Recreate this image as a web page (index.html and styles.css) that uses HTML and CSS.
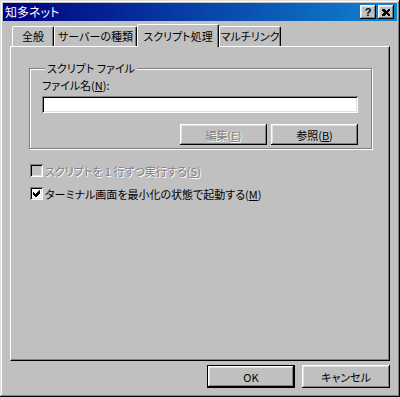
FILE: index.html
```html
<!DOCTYPE html>
<html lang="ja">
<head>
    <meta charset="UTF-8">
    <title>知多ネット</title>
    <link rel="stylesheet" href="styles.css">
</head>
<body>

    <div class="window">
        <div class="titlebar">
            <span class="title">知多ネット</span>
            <div class="caption-buttons">
                <button class="cap-btn help">?</button>
                <button class="cap-btn">
                    <svg width="8" height="7" viewBox="0 0 8 7" shape-rendering="crispEdges">
                        <path d="M0 0h2l2 2 2-2h2v1l-2 2.5 2 2.5v1h-2l-2-2-2 2h-2v-1l2-2.5-2-2.5z" fill="#000"/>
                    </svg>
                </button>
            </div>
        </div>

        <div class="tabs">
            <div class="tab tab-general">全般</div>
            <div class="tab tab-server">サーバーの種類</div>
            <div class="tab tab-script selected">スクリプト処理</div>
            <div class="tab tab-multi">マルチリンク</div>
        </div>

        <div class="panel">
            <fieldset class="group">
                <legend>スクリプト ファイル</legend>
                <label class="field-label" for="scriptFile">ファイル名(<u>N</u>):</label>
                <input class="text-input" type="text" id="scriptFile">
                <div class="group-buttons">
                    <button class="btn" disabled>編集(<u>E</u>)</button>
                    <button class="btn">参照(<u>B</u>)</button>
                </div>
            </fieldset>

            <div class="check disabled">
                <span class="box"></span>
                <span class="check-text">スクリプトを 1 行ずつ実行する(<u>S</u>)</span>
            </div>
            <div class="check">
                <span class="box">
                    <svg width="7" height="7" viewBox="0 0 7 7" shape-rendering="crispEdges">
                        <polygon points="0,2 2,4 6,0 7,0 7,3 3,7 2,7 0,5" fill="#000"/>
                    </svg>
                </span>
                <span class="check-text">ターミナル画面を最小化の状態で起動する(<u>M</u>)</span>
            </div>
        </div>

        <div class="dialog-buttons">
            <button class="btn btn-large default">OK</button>
            <button class="btn btn-large">キャンセル</button>
        </div>
    </div>

</body>
</html>
```

FILE: styles.css
```css
* {
    box-sizing: border-box;
}

body {
    margin: 0;
    background: #c0c0c0;
    font-family: "Noto Sans CJK JP", sans-serif;
    font-size: 11px;
    font-feature-settings: "palt";
    white-space: nowrap;
    color: #000;
}

u {
    text-decoration-thickness: 1px;
    text-underline-offset: 1px;
}

/* outer window frame */
.window {
    width: 400px;
    height: 397px;
    padding: 3px;
    display: flex;
    flex-direction: column;
    background: #c0c0c0;
    box-shadow: inset -1px -1px #000, inset 1px 1px #dfdfdf,
                inset -2px -2px #808080, inset 2px 2px #fff;
}

.titlebar {
    height: 18px;
    display: flex;
    align-items: center;
    padding: 0 3px 0 2px;
    background: linear-gradient(to right, #000080, #1084d0);
    color: #fff;
}

.title {
    flex: 1;
    font-size: 12px;
    line-height: 18px;
}

.caption-buttons {
    display: flex;
    gap: 2px;
}

.cap-btn {
    width: 16px;
    height: 14px;
    padding: 0;
    border: none;
    display: flex;
    align-items: center;
    justify-content: center;
    background: #c0c0c0;
    box-shadow: inset -1px -1px #000, inset 1px 1px #fff,
                inset -2px -2px #808080, inset 2px 2px #dfdfdf;
}

.cap-btn.help {
    font-family: "Liberation Sans", sans-serif;
    font-weight: bold;
    font-size: 11px;
    line-height: 14px;
    padding-bottom: 1px;
}

/* tabs */
.tabs {
    display: flex;
    align-items: flex-end;
    height: 22px;
    margin: 3px 0 0 9px;
}

.tab {
    height: 20px;
    line-height: 19px;
    text-align: center;
    background: #c0c0c0;
    border-top: 1px solid #fff;
    border-left: 1px solid #fff;
    border-right: 1px solid #000;
    border-radius: 2px 2px 0 0;
    box-shadow: inset -1px 0 #808080;
}

.tab-general { width: 42px; }
.tab-server { width: 83px; }
.tab-script { width: 82px; }
.tab-multi { width: 62px; }

.tab.selected {
    height: 23px;
    margin-bottom: -1px;
    padding-top: 2px;
    position: relative;
    z-index: 1;
}

/* property page */
.panel {
    width: 380px;
    height: 315px;
    margin-left: 7px;
    border-top: 1px solid #fff;
    border-left: 1px solid #fff;
    border-right: 1px solid #000;
    border-bottom: 1px solid #000;
    box-shadow: inset -1px -1px #808080;
}

.group {
    width: 343px;
    margin: 14px 0 0 18px;
    padding: 3px 13px 3px 12px;
    min-width: 0;
    border: 1px solid #808080;
    box-shadow: inset 1px 1px #fff, 1px 1px #fff;
}

.group legend {
    margin-left: 3px;
    padding: 0 2px;
    line-height: 14px;
    background: #c0c0c0;
}

.field-label {
    display: block;
    line-height: 14px;
}

.text-input {
    display: block;
    width: 316px;
    height: 17px;
    margin-top: 4px;
    border: none;
    background: #fff;
    box-shadow: inset 1px 1px #808080, inset -1px -1px #fff,
                inset 2px 2px #000, inset -2px -2px #dfdfdf;
}

.group-buttons {
    display: flex;
    justify-content: flex-end;
    gap: 4px;
    margin-top: 11px;
}

.btn {
    width: 87px;
    height: 21px;
    padding: 0;
    border: none;
    font: inherit;
    font-feature-settings: "palt";
    color: #000;
    background: #c0c0c0;
    box-shadow: inset -1px -1px #000, inset 1px 1px #fff,
                inset -2px -2px #808080, inset 2px 2px #dfdfdf;
}

.btn:disabled {
    color: #808080;
    text-shadow: 1px 1px #fff;
}

/* checkboxes */
.check {
    display: flex;
    align-items: center;
    gap: 2px;
    height: 17px;
    margin: 6px 0 0 19px;
}

.group + .check {
    margin-top: 13px;
}

.box {
    width: 13px;
    height: 13px;
    padding: 3px;
    display: flex;
    background: #fff;
    box-shadow: inset 1px 1px #808080, inset -1px -1px #fff,
                inset 2px 2px #000, inset -2px -2px #dfdfdf;
}

.check.disabled .box {
    background: #c0c0c0;
}

.check.disabled .check-text {
    color: #808080;
    text-shadow: 1px 1px #fff;
}

/* OK / Cancel */
.dialog-buttons {
    display: flex;
    justify-content: flex-end;
    gap: 7px;
    margin-top: 4px;
    padding-right: 7px;
}

.btn-large {
    width: 88px;
    height: 23px;
}

.btn.default {
    border: 1px solid #000;
    box-shadow: inset -1px -1px #000, inset 1px 1px #fff,
                inset -2px -2px #808080, inset 2px 2px #dfdfdf;
}
```
